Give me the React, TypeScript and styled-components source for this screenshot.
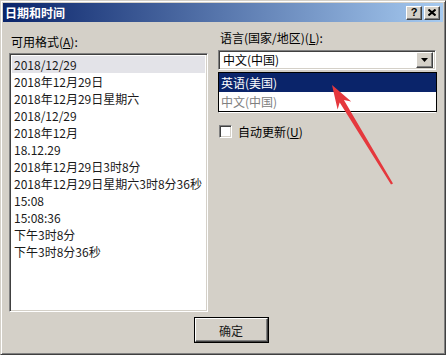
import styled, { createGlobalStyle, css } from "styled-components";

const GlobalStyle = createGlobalStyle`
  html, body {
    margin: 0;
    padding: 0;
    background: #d4d0c8;
  }
  body {
    font-family: "Noto Sans CJK SC", "Noto Sans", sans-serif;
  }
`;

const sunken = css`
  border: 1px solid;
  border-color: #808080 #ffffff #ffffff #808080;
  box-shadow: inset 1px 1px 0 #404040, inset -1px -1px 0 #d4d0c8;
`;

const raised = css`
  border: 1px solid;
  border-color: #ffffff #404040 #404040 #ffffff;
  box-shadow: inset -1px -1px 0 #808080, inset 1px 1px 0 #d4d0c8;
  background: #d4d0c8;
`;

const Window = styled.div`
  position: relative;
  width: 446px;
  height: 355px;
  box-sizing: border-box;
  background: #d4d0c8;
  border: 1px solid;
  border-color: #d4d0c8 #404040 #404040 #d4d0c8;
  box-shadow: inset 1px 1px 0 #ffffff, inset -1px -1px 0 #808080;
  padding: 2px;
  display: flex;
  flex-direction: column;
  font-size: 12px;
  color: #000;
`;

const TitleBar = styled.div`
  height: 19px;
  display: flex;
  align-items: center;
  padding: 0 3px 0 2px;
  background: linear-gradient(to right, #0a246a, #a6caf0);
  color: #fff;
  font-weight: bold;
  font-size: 12px;
`;

const TitleText = styled.span`
  flex: 1;
  line-height: 19px;
`;

const TitleButton = styled.div`
  ${raised};
  box-sizing: border-box;
  width: 16px;
  height: 14px;
  margin-left: 2px;
  display: flex;
  align-items: center;
  justify-content: center;
  color: #000;
  font-family: "Liberation Sans", Arial, sans-serif;
  font-weight: bold;
  font-size: 11px;
  line-height: 1;
`;

const Body = styled.div`
  display: grid;
  grid-template-columns: 199px 218px;
  column-gap: 10px;
  padding: 13px 0 0 6px;
  align-items: start;
`;

const Column = styled.div<{ $shift?: number }>`
  display: flex;
  flex-direction: column;
  margin-top: ${(p) => p.$shift ?? 0}px;
`;

const Label = styled.div`
  height: 14px;
  line-height: 14px;
  padding-left: 2px;
  white-space: nowrap;
`;

const ListBox = styled.div`
  ${sunken};
  margin-top: 4px;
  height: 259px;
  box-sizing: border-box;
  background: #fff;
  padding: 2px;
`;

const ListItem = styled.div<{ $selected?: boolean }>`
  height: 17px;
  line-height: 17px;
  padding-left: 2px;
  white-space: nowrap;
  color: #1a1a1a;
  background: ${(p) => (p.$selected ? "#e3e3e8" : "transparent")};
`;

const ComboWrap = styled.div<{ $gap: number }>`
  position: relative;
  margin-top: ${(p) => p.$gap}px;
`;

const Combo = styled.div`
  ${sunken};
  box-sizing: border-box;
  height: 20px;
  background: #fff;
  display: flex;
  align-items: center;
  padding: 2px 2px 2px 4px;
`;

const ComboText = styled.span`
  flex: 1;
  line-height: 16px;
`;

const DropButton = styled.div`
  ${raised};
  box-sizing: border-box;
  width: 17px;
  height: 16px;
  display: flex;
  align-items: center;
  justify-content: center;
`;

const Popup = styled.div`
  position: absolute;
  top: calc(100% + 2px);
  left: 0;
  width: 219px;
  box-sizing: border-box;
  border: 1px solid #000;
  background: #fff;
  z-index: 2;
`;

const PopupItem = styled.div<{ $selected?: boolean }>`
  height: 19px;
  line-height: 19px;
  padding-left: 2px;
  background: ${(p) => (p.$selected ? "#0a246a" : "#fff")};
  color: ${(p) => (p.$selected ? "#fff" : "#808080")};
`;

const CheckRow = styled.div`
  display: flex;
  align-items: center;
  gap: 6px;
  margin-top: 10px;
  padding-left: 1px;
`;

const CheckBox = styled.div`
  ${sunken};
  box-sizing: border-box;
  width: 13px;
  height: 13px;
  background: #fff;
`;

const Footer = styled.div`
  display: flex;
  justify-content: center;
  padding: 5px 0 0 16px;
`;

const DefaultButton = styled.div`
  box-sizing: border-box;
  width: 75px;
  height: 26px;
  border: 1px solid #000;
  display: flex;
`;

const ButtonFace = styled.div`
  ${raised};
  flex: 1;
  display: flex;
  align-items: center;
  justify-content: center;
  color: #1a1a1a;
`;

const Annotation = styled.svg`
  position: absolute;
  left: 320px;
  top: 78px;
  z-index: 3;
`;

const formats = [
  "2018/12/29",
  "2018年12月29日",
  "2018年12月29日星期六",
  "2018/12/29",
  "2018年12月",
  "18.12.29",
  "2018年12月29日3时8分",
  "2018年12月29日星期六3时8分36秒",
  "15:08",
  "15:08:36",
  "下午3时8分",
  "下午3时8分36秒",
];

function DownArrow() {
  return (
    <svg width="7" height="4" viewBox="0 0 7 4">
      <path d="M0 0h7L3.5 4z" fill="#000" />
    </svg>
  );
}

export default function App() {
  return (
    <>
      <GlobalStyle />
      <Window>
        <TitleBar>
          <TitleText>日期和时间</TitleText>
          <TitleButton>?</TitleButton>
          <TitleButton>
            <svg width="8" height="7" viewBox="0 0 8 7">
              <path d="M0.5 0.5L7.5 6.5M7.5 0.5L0.5 6.5" stroke="#000" strokeWidth="2" />
            </svg>
          </TitleButton>
        </TitleBar>
        <Body>
          <Column>
            <Label>
              可用格式(<u>A</u>):
            </Label>
            <ListBox>
              {formats.map((f, i) => (
                <ListItem key={i} $selected={i === 0}>
                  {f}
                </ListItem>
              ))}
            </ListBox>
          </Column>
          <Column $shift={-4}>
            <Label>
              语言(国家/地区)(<u>L</u>):
            </Label>
            <ComboWrap $gap={5}>
              <Combo>
                <ComboText>中文(中国)</ComboText>
                <DropButton>
                  <DownArrow />
                </DropButton>
              </Combo>
              <Popup>
                <PopupItem $selected>英语(美国)</PopupItem>
                <PopupItem>中文(中国)</PopupItem>
              </Popup>
            </ComboWrap>
            <ComboWrap $gap={23}>
              <Combo>
                <ComboText />
                <DropButton>
                  <DownArrow />
                </DropButton>
              </Combo>
            </ComboWrap>
            <CheckRow>
              <CheckBox />
              <span>
                自动更新(<u>U</u>)
              </span>
            </CheckRow>
          </Column>
        </Body>
        <Footer>
          <DefaultButton>
            <ButtonFace>确定</ButtonFace>
          </DefaultButton>
        </Footer>
        <Annotation width="80" height="110" viewBox="0 0 80 110">
          <polygon
            points="11,6 30.2,22.4 22.9,20.9 72,104.4 70,105.6 18.7,23.5 16.6,30.6"
            fill="#e5383d"
          />
        </Annotation>
      </Window>
    </>
  );
}
